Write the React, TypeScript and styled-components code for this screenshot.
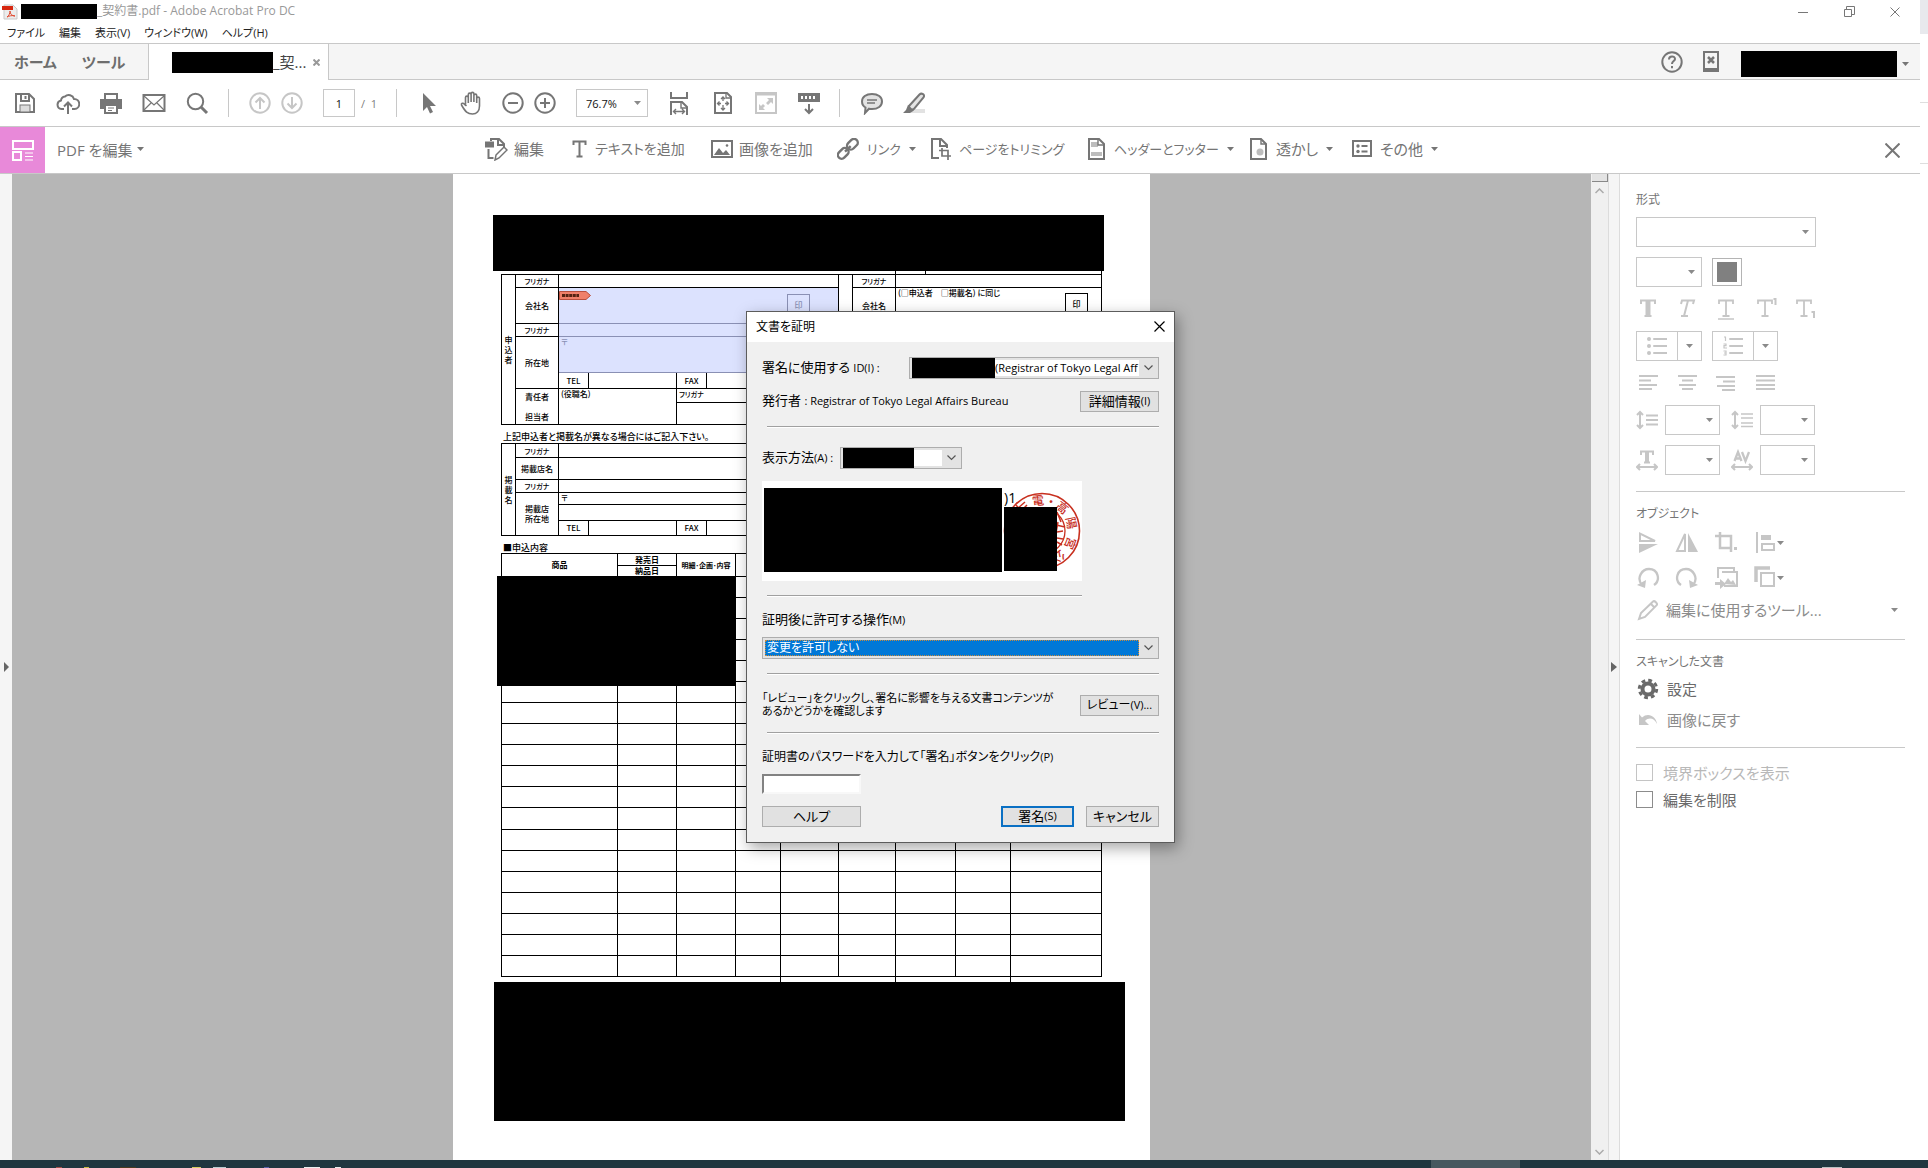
import React from 'react';
import styled, { createGlobalStyle, css } from 'styled-components';

const c = {
  line: '#c8c8c8',
  icon: '#767676',
  text: '#757575',
  soft: '#c6c6c6',
  caret: '#8a8a8a',
};

const Global = createGlobalStyle`
  * { box-sizing: border-box; }
  body { margin: 0; background: #fff; }
  body, button, input, select {
    font-family: "Open Sans", "Noto Sans CJK JP", sans-serif;
    font-feature-settings: "palt";
  }
  button, select, input { margin: 0; padding: 0; border: 0; background: none; color: inherit; border-radius: 0; }
  button { display: inline-flex; align-items: center; justify-content: center; white-space: nowrap; }
  svg { display: block; flex: none; }
`;

/* ---------- shell ---------- */
const Screen = styled.div`
  display: flex;
  flex-direction: column;
  height: 100vh;
  overflow: hidden;
`;
const Desktop = styled.div`
  display: flex;
  flex: 1;
  min-height: 0;
`;
const AppWindow = styled.div`
  position: relative;
  display: flex;
  flex-direction: column;
  flex: 1;
  min-width: 0;
`;
const Behind = styled.div`
  width: 8px;
  display: flex;
  flex-direction: column;
`;
const BehindPart = styled.div<{ $h: number; $tint?: boolean }>`
  height: ${p => p.$h}px;
  background: ${p => (p.$tint ? '#e8e9ed' : '#fff')};
  border-bottom: 1px solid ${p => (p.$tint ? '#e8e9ed' : '#dedede')};
`;
const Taskbar = styled.footer`
  display: flex;
  align-items: flex-end;
  height: 8px;
  background: #20363f;
`;
const TaskBit = styled.span<{ $gap: number; $w: number; $color: string; $h?: number }>`
  margin-left: ${p => p.$gap}px;
  width: ${p => p.$w}px;
  height: ${p => p.$h ?? 1}px;
  background: ${p => p.$color};
`;
const Redaction = styled.span<{ $w: number; $h: number }>`
  display: block;
  flex: none;
  width: ${p => p.$w}px;
  height: ${p => p.$h}px;
  background: #000;
`;

/* ---------- title and menu ---------- */
const TitleBar = styled.header`
  display: flex;
  align-items: center;
  height: 23px;
  padding: 0 20px 0 2px;
  font-size: 12px;
  color: #999;
`;
const TitleText = styled.h1`
  margin: 0;
  flex: 1;
  font-size: 12px;
  font-weight: 400;
  line-height: 20px;
  padding-bottom: 2px;
`;
const TitleIcon = styled.span`
  width: 19px;
`;
const WindowButton = styled.button`
  width: 46px;
  height: 20px;
  color: #777;
  &:last-child { width: 10px; }
  &:nth-last-child(2) { width: 46px; margin-right: 18px; }
`;
const MenuBar = styled.nav`
  display: flex;
  gap: 14px;
  height: 20px;
  padding-left: 7px;
`;
const MenuItem = styled.button`
  height: 20px;
  padding-bottom: 2px;
  font-size: 11px;
  color: #222;
`;

/* ---------- tabs ---------- */
const TabBar = styled.div`
  display: flex;
  height: 37px;
  background: #f5f5f5;
  border-top: 1px solid ${c.line};
`;
const TabGroup = styled.div`
  display: flex;
  gap: 25px;
  width: 149px;
  padding-left: 14px;
  border-right: 1px solid ${c.line};
  border-bottom: 1px solid ${c.line};
`;
const Tab = styled.button`
  font-size: 15px;
  font-weight: 700;
  color: #6e6e6e;
`;
const DocTab = styled.div`
  display: flex;
  align-items: center;
  width: 179px;
  padding-left: 23px;
  background: #fff;
  font-size: 15px;
  color: #444;
`;
const DocTabName = styled.span`
  flex: 1;
  min-width: 0;
  line-height: 22px;
  white-space: nowrap;
`;
const TabClose = styled.button`
  width: 23px;
  height: 26px;
  color: #999;
`;
const TabEnd = styled.div`
  display: flex;
  flex: 1;
  align-items: center;
  justify-content: flex-end;
  padding-right: 11px;
  border-left: 1px solid ${c.line};
  border-bottom: 1px solid ${c.line};
  color: ${c.icon};
`;
const Account = styled.button`
  gap: 5px;
  margin-left: 11px;
  padding-top: 4px;
`;

/* ---------- toolbars ---------- */
const Toolbar = styled.div`
  display: flex;
  align-items: center;
  height: 47px;
  padding-left: 3px;
  border-bottom: 1px solid ${c.line};
  color: ${c.icon};
`;
const ToolButton = styled.button<{ $w?: number; $off?: boolean }>`
  width: ${p => p.$w ?? 43}px;
  height: 32px;
  color: ${p => (p.$off ? c.soft : c.icon)};
`;
const Divider = styled.span<{ $l: number; $r: number }>`
  width: 1px;
  height: 28px;
  margin: 0 ${p => p.$r}px 0 ${p => p.$l}px;
  background: ${c.line};
`;
const Space = styled.span<{ $w: number }>`
  width: ${p => p.$w}px;
`;
const PageInput = styled.input`
  width: 32px;
  height: 28px;
  border: 1px solid ${c.line};
  font-size: 11px;
  text-align: center;
  color: #111;
`;
const PageTotal = styled.span`
  width: 35px;
  font-size: 11px;
  color: #808080;
`;
const EditBar = styled.div`
  display: grid;
  grid-template-columns: 1fr auto 1fr;
  align-items: center;
  height: 47px;
  border-bottom: 1px solid ${c.line};
  color: ${c.icon};
`;
const EditTitle = styled.div`
  display: flex;
  align-items: center;
  gap: 12px;
`;
const EditBadge = styled.span`
  display: flex;
  align-items: center;
  justify-content: center;
  width: 45px;
  height: 46px;
  background: #e889d9;
  color: #fff;
`;
const EditName = styled.button`
  gap: 5px;
  padding-bottom: 2px;
  font-size: 15px;
  color: ${c.text};
`;
const EditTools = styled.div`
  display: flex;
`;
const EditTool = styled.button<{ $w: number; $g?: number; $size?: number }>`
  width: ${p => p.$w}px;
  gap: ${p => p.$g ?? 8}px;
  justify-content: flex-start;
  padding-bottom: 2px;
  font-size: ${p => p.$size ?? 15}px;
  line-height: 24px;
  color: ${c.text};
`;
const CloseBar = styled.button`
  justify-self: end;
  width: 40px;
  height: 40px;
  margin-right: 8px;
  color: ${c.icon};
`;

/* ---------- workspace ---------- */
const Workspace = styled.div`
  display: flex;
  flex: 1;
  min-height: 0;
`;
const Rail = styled.button<{ $edge?: boolean }>`
  flex: none;
  width: 12px;
  height: 100%;
  background: #f5f5f5;
  color: #666;
  border-right: ${p => (p.$edge ? '1px solid #dcdcdc' : '0')};
  border-left: ${p => (p.$edge ? '1px solid #dcdcdc' : '0')};
`;
const Canvas = styled.main`
  display: flex;
  flex: 1;
  justify-content: center;
  min-width: 0;
  overflow: hidden;
  background: #b6b6b6;
`;
const Scrollbar = styled.div`
  display: flex;
  flex: none;
  flex-direction: column;
  justify-content: space-between;
  align-items: center;
  width: 17px;
  background: #f0f0f0;
  color: #aaa;
`;
const ScrollTop = styled.div`
  display: flex;
  flex-direction: column;
  align-items: center;
`;
const SplitHandle = styled.span`
  width: 16px;
  height: 8px;
  background: #e3e3e3;
  border-right: 1px solid #888;
  border-bottom: 1px solid #888;
`;
const ScrollButton = styled.button`
  width: 17px;
  height: 17px;
`;

/* ---------- document ---------- */
const Sheet = styled.article`
  flex: none;
  width: 697px;
  padding-top: 41px;
  background: #fff;
  color: #000;
  font-size: 8px;
  line-height: 10px;
  font-family: "Noto Sans CJK JP", sans-serif;
`;
const SheetBlock = styled.div<{ $l: number; $w: number; $h: number }>`
  margin-left: ${p => p.$l}px;
  width: ${p => p.$w}px;
  height: ${p => p.$h}px;
  background: #000;
`;
const FormArea = styled.div`
  width: 601px;
  margin-left: 48px;
`;
const Ticks = styled.div<{ $h: number }>`
  display: flex;
  height: ${p => p.$h}px;
`;
const Tick = styled.span<{ $w: number }>`
  width: ${p => p.$w}px;
  border-right: 1px solid #000;
`;
const FormTable = styled.table`
  width: 601px;
  table-layout: fixed;
  border-collapse: collapse;
  td, th {
    padding: 0;
    border: 1px solid #000;
    font-weight: 500;
    text-align: center;
    vertical-align: middle;
    overflow: hidden;
  }
  th { font-weight: 700; }
`;
const FormRow = styled.tr<{ $h: number }>`
  height: ${p => p.$h}px;
`;
const Cell = styled.td<{ $top?: boolean; $blue?: boolean }>`
  ${p => p.$top && css`&& { text-align: left; vertical-align: top; padding-left: 2px; }`}
  ${p => p.$blue && css`&& { background: #dce2fe; border-color: #8a90b4; color: #8a90b4; background-clip: padding-box; }`}
`;
const Kana = styled.span`
  font-size: 7px;
  line-height: 8px;
`;
const SheetCaption = styled.p<{ $h: number }>`
  margin: 0;
  padding-left: 2px;
  height: ${p => p.$h}px;
  font-size: 9px;
  line-height: ${p => p.$h + 6}px;
  font-weight: 500;
`;
const CompanyField = styled.div`
  display: flex;
  justify-content: space-between;
  align-items: flex-start;
  height: 34px;
  padding: 2px 28px 0 0;
`;
const SealBox = styled.span<{ $faint?: boolean }>`
  width: 23px;
  height: 23px;
  margin-top: ${p => (p.$faint ? 3 : 5)}px;
  border: 1px solid ${p => (p.$faint ? '#8a90b4' : '#000')};
  color: ${p => (p.$faint ? '#8a90b4' : '#000')};
  line-height: 20px;
  text-align: center;
`;
const SecondCompany = styled.div`
  display: flex;
  justify-content: space-between;
  align-items: flex-start;
  height: 34px;
  padding-right: 13px;
`;
const Items = styled.div`
  position: relative;
`;
const ItemsRedaction = styled.div`
  position: absolute;
  left: -4px;
  top: 23px;
  width: 239px;
  height: 110px;
  background: #000;
`;

/* ---------- side panel ---------- */
const Panel = styled.aside`
  flex: none;
  width: 300px;
  padding: 15px 15px 0 16px;
  color: ${c.soft};
`;
const PanelTitle = styled.h2`
  margin: 0;
  height: 22px;
  font-size: 12px;
  font-weight: 400;
  line-height: 22px;
  color: ${c.text};
`;
const PanelRow = styled.div<{ $h: number; $mt?: number; $gap?: number }>`
  display: flex;
  align-items: center;
  height: ${p => p.$h}px;
  margin-top: ${p => p.$mt ?? 0}px;
  gap: ${p => p.$gap ?? 0}px;
`;
const PanelRule = styled.hr<{ $mt: number; $mb: number }>`
  height: 1px;
  border: 0;
  margin: ${p => p.$mt}px 0 ${p => p.$mb}px;
  background: ${c.line};
`;
const SelectWrap = styled.span<{ $w: number; $h: number }>`
  display: grid;
  flex: none;
  align-items: center;
  width: ${p => p.$w}px;
  height: ${p => p.$h}px;
  border: 1px solid ${c.line};
  color: ${c.caret};
  > * { grid-area: 1 / 1; }
  > svg { justify-self: end; margin-right: 6px; pointer-events: none; }
`;
const PlainSelect = styled.select`
  appearance: none;
  width: 100%;
  height: 100%;
  padding-left: 9px;
  font-size: 11px;
  color: #111;
`;
const Swatch = styled.button`
  width: 30px;
  height: 28px;
  border: 1px solid #b4b4b4;
`;
const SwatchFill = styled.span`
  width: 20px;
  height: 20px;
  background: #808080;
`;
const PanelIcon = styled.button<{ $w?: number }>`
  width: ${p => p.$w ?? 39}px;
  height: 30px;
  justify-content: flex-start;
  color: ${c.soft};
`;
const SplitButton = styled.span`
  display: flex;
  width: 66px;
  height: 30px;
  border: 1px solid ${c.line};
`;
const SplitMain = styled.button`
  width: 41px;
  color: ${c.soft};
  border-right: 1px solid ${c.line};
`;
const SplitMore = styled.button`
  flex: 1;
  color: ${c.caret};
`;
const PanelLabelIcon = styled.span<{ $w: number }>`
  width: ${p => p.$w}px;
`;
const PanelAction = styled.button<{ $tone: string }>`
  flex: 1;
  gap: 8px;
  justify-content: flex-start;
  font-size: 15px;
  line-height: 24px;
  color: ${p => p.$tone};
`;
const MoreCaret = styled.span`
  color: ${c.caret};
`;
const PushRight = styled(MoreCaret)`
  margin-left: auto;
  margin-right: 7px;
`;
const UndoIcon = styled.span`
  color: ${c.soft};
`;
const CheckLabel = styled.label<{ $off?: boolean }>`
  display: flex;
  align-items: center;
  gap: 10px;
  height: 27px;
  font-size: 15px;
  line-height: 24px;
  color: ${p => (p.$off ? '#b8b8b8' : '#6a6a6a')};
`;
const CheckBox = styled.input`
  appearance: none;
  width: 17px;
  height: 17px;
  border: 1px solid #8c8c8c;
  background: #fff;
  &:disabled { border-color: #c4c4c4; }
`;

/* ---------- dialog ---------- */
const Dialog = styled.section`
  position: absolute;
  top: 311px;
  left: 50%;
  width: 429px;
  margin-left: -214px;
  background: #f0f0f0;
  border: 1px solid #5c5c5c;
  box-shadow: 3px 5px 14px rgba(0, 0, 0, 0.35);
  color: #000;
  font-size: 13px;
`;
const DialogBar = styled.div`
  display: flex;
  align-items: center;
  justify-content: space-between;
  height: 30px;
  padding: 0 0 2px 9px;
  background: #fff;
`;
const DialogTitle = styled.h2`
  margin: 0;
  font-size: 12px;
  font-weight: 400;
`;
const DialogClose = styled.button`
  width: 30px;
  height: 28px;
`;
const DialogBody = styled.form`
  padding: 15px 15px 15px 15px;
`;
const Row = styled.div<{ $mt?: number; $h?: number }>`
  display: flex;
  align-items: center;
  justify-content: space-between;
  height: ${p => p.$h ?? 22}px;
  margin-top: ${p => p.$mt ?? 0}px;
`;
const DialogLabel = styled.label<{ $dense?: boolean }>`
  font-size: ${p => (p.$dense ? 12 : 13)}px;
  line-height: 18px;
  padding-bottom: 2px;
  white-space: nowrap;
`;
const DialogText = styled.p<{ $dense?: boolean }>`
  margin: 0;
  font-size: ${p => (p.$dense ? 11 : 13)}px;
  line-height: 13px;
  padding-bottom: 2px;
  white-space: nowrap;
`;
const Small = styled.span`
  font-size: 11px;
`;
const Rule = styled.hr<{ $mt: number; $short?: boolean }>`
  height: 2px;
  margin: ${p => p.$mt}px ${p => (p.$short ? 77 : 0)}px 0 5px;
  border: 0;
  border-top: 1px solid #a0a0a0;
  border-bottom: 1px solid #fff;
`;
const Combo = styled.span<{ $w?: number }>`
  display: flex;
  align-items: center;
  width: ${p => (p.$w ? `${p.$w}px` : '100%')};
  height: 22px;
  padding-left: 2px;
  border: 1px solid #adadad;
  background: #e3e3e3;
`;
const ComboSelect = styled.select<{ $active?: boolean }>`
  appearance: none;
  flex: 1;
  min-width: 0;
  height: 16px;
  background: ${p => (p.$active ? '#0078d7' : '#fff')};
  color: ${p => (p.$active ? '#fff' : '#000')};
  outline: ${p => (p.$active ? '1px dotted #c98a3c' : 'none')};
  outline-offset: -1px;
  padding-left: ${p => (p.$active ? 2 : 0)}px;
  font-size: ${p => (p.$active ? 12 : 11)}px;
  line-height: 16px;
  text-overflow: clip;
`;
const ComboArrow = styled.span`
  display: flex;
  justify-content: center;
  width: 19px;
  color: #555;
`;
const ComboRow = styled.div`
  display: flex;
  align-items: center;
  gap: 7px;
`;
const PushButton = styled.button<{ $w: number; $primary?: boolean; $dense?: boolean }>`
  flex: none;
  width: ${p => p.$w}px;
  height: 21px;
  padding-bottom: 2px;
  border: ${p => (p.$primary ? '2px solid #0a70c4' : '1px solid #adadad')};
  background: #e1e1e1;
  font-size: ${p => (p.$dense ? 12 : 13)}px;
`;
const Preview = styled.div`
  position: relative;
  display: flex;
  gap: 2px;
  width: 320px;
  height: 100px;
  margin-top: 12px;
  padding: 7px 2px;
  background: #fff;
  overflow: hidden;
`;
const PreviewSide = styled.div`
  position: relative;
  display: flex;
  flex-direction: column;
  font-size: 14px;
`;
const PreviewText = styled.span`
  height: 19px;
  line-height: 19px;
`;
const Stamp = styled.svg`
  position: absolute;
  left: 241px;
  top: 11px;
  overflow: visible;
`;
const Password = styled.input`
  width: 99px;
  height: 20px;
  margin-top: 7px;
  border: 2px solid;
  border-color: #828282 #f8f8f8 #f8f8f8 #828282;
  background: #fff;
  display: block;
`;
const ButtonPair = styled.div`
  display: flex;
  gap: 12px;
`;

/* ---------- drawings ---------- */
type IcoProps = { s?: number; w?: number; children: React.ReactNode; sw?: number };
const Ico = ({ s = 24, w, sw = 2, children }: IcoProps) => (
  <svg width={w ?? s} height={s} viewBox={`0 0 ${w ?? s} ${s}`} fill="none" stroke="currentColor" strokeWidth={sw} aria-hidden="true">
    {children}
  </svg>
);
const F = { fill: 'currentColor', stroke: 'none' };
const Caret = () => (
  <svg width="7" height="4" viewBox="0 0 7 4" aria-hidden="true"><path d="M0 0h7L3.500 4z" fill="currentColor" /></svg>
);
const Chevron = () => (
  <svg width="9" height="6" viewBox="0 0 9 6" aria-hidden="true"><path d="M.5.5l4 4 4-4" fill="none" stroke="currentColor" strokeWidth="1.200" /></svg>
);
const PdfLogo = () => (
  <svg width="16" height="16" viewBox="0 0 16 16" aria-hidden="true">
    <path d="M2 1h9l4 4v10H2z" fill="#ececec" stroke="#c9c9c9" />
    <path d="M0 2h11v4H0z" fill="#d6260f" />
    <path d="M5 13c2-1 3-4 3-6 0 3 2 5 5 5-3-1-6 0-8 1z" fill="none" stroke="#e0492f" />
  </svg>
);
const Save = () => <Ico><path d="M3 3h13l5 5v13H3z" /><path d="M8 3v7h8V3M12.500 5v3" /><rect x="7" y="14" width="10" height="7" fill="#dcdcdc" strokeWidth="1" /></Ico>;
const Cloud = () => <Ico><path d="M8 18H5.500A4.300 4.300 0 0 1 5 9.500 4.500 4.500 0 0 1 9 5.500 5.500 5.500 0 0 1 18 8a5 5 0 0 1 .5 10H16" /><path d="M12 23V12M8 15.500l4-4 4 4" /></Ico>;
const Printer = () => <Ico><path d="M6 8V3h12v5" /><path d="M1 8h22v10h-4v-5H5v5H1z" {...F} /><path d="M6 14h12v8H6z" /><path d="M9 17h6M9 19.500h4" strokeWidth="1" /></Ico>;
const Mail = () => <Ico><rect x="1.500" y="4" width="21" height="16" /><path d="M2 5l10 9L22 5M2 19l7-7M22 19l-7-7" strokeWidth="1.200" /></Ico>;
const Search = () => <Ico><circle cx="10.500" cy="10.500" r="7.700" /><path d="M16 16l6 6" strokeWidth="3" /></Ico>;
const Circled = ({ d }: { d: string }) => <Ico><circle cx="12" cy="12" r="9.700" /><path d={d} /></Ico>;
const Cursor = () => <Ico><path d="M6 2v18l4-4 3 6.500 3-1.500-3-6h6z" {...F} /></Ico>;
const Hand = () => <Ico sw={1.6}><path d="M6.500 15V6.500a1.400 1.400 0 0 1 2.800 0V12M9.300 11V3.500a1.400 1.400 0 0 1 2.800 0V11M12.100 11V2.800a1.400 1.400 0 0 1 2.800 0V11M14.900 11V4.500a1.400 1.400 0 0 1 2.800 0V12M17.700 12V7.500a1.400 1.400 0 0 1 2.800 0V15c0 5-3 8-7 8-5 0-7-2-11-9-.6-1.600 1.600-2.500 2.700-1L7.500 15" /></Ico>;
const FitWidth = () => <Ico><path d="M4 1v6h16V1M4 24V11h11l5 5v8" /><path d="M14 11v6h6M7 20.500h10M9 18l-2.500 2.500L9 23M15 18l2.500 2.500L15 23" strokeWidth="1.400" /></Ico>;
const FitPage = () => <Ico><path d="M4 2h12l4 4v16H4z" /><path d="M12 6v4M12 14v5M7 12.500h3M14 12.500h4M10 8l2-2 2 2M10 17l2 2 2-2M8.500 10.500l-2 2 2 2M15.500 10.500l2 2-2 2" strokeWidth="1.300" /><path d="M15 2v5h5" strokeWidth="1.300" /></Ico>;
const FullScreen = () => <Ico><path d="M2 2h20v20H2zM2 3.500h20" /><path d="M19 7v6l-2-2-3 3-2-2 3-3-2-2zM5 19v-6l2 2 2-2 2 2-2 2 2 2z" {...F} /></Ico>;
const Keys = () => <Ico><path d="M1 2h22v9H1z" {...F} /><path d="M4 6.500h16" stroke="#fff" strokeWidth="3" strokeDasharray="2 2" /><path d="M12 13v9M8 18l4 4 4-4" /></Ico>;
const Comment = () => <Ico><path d="M12 3c6 0 10 3 10 7.500S18 18 12 18c-1 0-2 0-3-.3L5 22l.5-5.500C3 15 2 13 2 10.500 2 6 6 3 12 3z" fill="#e2e2e2" /><path d="M7 9h10M7 12h8" strokeWidth="1.300" /></Ico>;
const Marker = () => <Ico><path d="M8 22h15v-4H12z" fill="#e2e2e2" stroke="none" /><path d="M7 15L17.500 3.500c2-2 6 0 4 3L12 18l-4 1.500z" fill="#e4e4e4" strokeWidth="2" /><path d="M6 14l6 5.500L8 22H1l3-3z" {...F} /></Ico>;
const Help = () => <Ico><circle cx="12" cy="12" r="9.700" /><path d="M9 9.500c0-4 6-4 6-.5 0 2-3 2.300-3 5M12 16v2.200" /></Ico>;
const Phone = () => <Ico><path d="M5 2h14v19H5z" /><path d="M5 18h14v4H5z" {...F} /><path d="M9 7l6 6M15 7l-6 6" strokeWidth="2.500" /></Ico>;
const EditBadgeIcon = () => <Ico><path d="M2 3h20v8H2zM2 14h8v8H2z" /><path d="M14 15h8M14 18.500h8M14 22h8" strokeWidth="1.200" /></Ico>;
const EditDoc = () => <Ico><path d="M1 4.500h9v6H1z" {...F} /><path d="M7 4V2h8l5 5v3M14 2v6h6M4.500 12v9h5" /><path d="M12 18l8-8 3 3-8 8-4 2z" fill="#fff" strokeWidth="1.500" /></Ico>;
const TextT = () => <Ico s={18} w={15}><path d="M1.500 5V1.500h12V5M7.500 2v14M4.500 16.500h6" /></Ico>;
const Picture = () => <Ico s={22}><path d="M1 3h20v16H1z" /><path d="M3 17l5-7 4 5 3-3 4 5z" {...F} /><circle cx="16" cy="7.500" r="1.300" {...F} /></Ico>;
const LinkIcon = () => <Ico s={22}><g transform="rotate(-45 11 11)"><rect x="-1.500" y="7" width="12" height="7.500" rx="3.700" strokeWidth="2.400" /><rect x="11.500" y="7" width="12" height="7.500" rx="3.700" strokeWidth="2.400" /><path d="M7 10.800h8" strokeWidth="2.400" /></g></Ico>;
const CropPage = () => <Ico s={22} w={20}><path d="M8 20H1V1h9l6 6v3M9 1v7h7" /><path d="M11 10v8h9M8 12.500h9V22" strokeWidth="1.700" /></Ico>;
const HeaderPage = () => <Ico s={22} w={18}><path d="M1 1h10l5 5v15H1z" /><path d="M3 4h7v5H3zM3 14h11v4H3z" fill="#bdbdbd" stroke="none" /><path d="M10 1v6h6" strokeWidth="1.400" /></Ico>;
const MarkPage = () => <Ico s={22} w={18}><path d="M1 1h10l5 5v15H1z" /><circle cx="10" cy="14" r="3.500" fill="#bdbdbd" stroke="none" /><path d="M11 1v5h5" strokeWidth="1.400" /></Ico>;
const ListBox = () => <Ico s={20}><path d="M1 2h18v15H1z" /><circle cx="6" cy="7" r="1.700" {...F} /><circle cx="6" cy="12.500" r="1.700" {...F} /><path d="M9.500 7h6M9.500 12.500h6" /></Ico>;
const Cross = ({ n, sw = 1 }: { n: number; sw?: number }) => <Ico s={n} sw={sw}><path d={`M.5.5L${n - 0.5} ${n - 0.5}M${n - 0.5}.5L.5 ${n - 0.5}`} /></Ico>;
const Tee = ({ kind }: { kind: 'b' | 'i' | 'u' | 'sup' | 'sub' }) => (
  <Ico s={24} sw={kind === 'b' ? 2 : 1.5}>
    {kind === 'i'
      ? <path d="M6 7l1-3.500h12L18 7M13 3.500L9 19M6 19h7" strokeWidth="2" />
      : <path d="M5 7V3.500h14V7M12 3.500V19M8.500 19h7" strokeWidth={kind === 'b' ? 2 : 1.8} />}
    {kind === 'b' && <path d="M12 3v16" strokeWidth="5" />}
    {kind === 'u' && <path d="M4 22h16" />}
    {kind === 'sup' && <path d="M20.500 2h2V8" strokeWidth="2" />}
    {kind === 'sub' && <path d="M19.500 15h2.500v6" strokeWidth="2" />}
  </Ico>
);
const Bullets = ({ numbered }: { numbered?: boolean }) => (
  <Ico s={20}>
    <path d="M7 3h13M7 10h13M7 17h13" strokeLinecap="round" />
    {numbered
      ? <path d="M1 1h1.500v4M.5 8H3v1.700H1V12h3M.5 15H3v4H.5M3 17H1" strokeWidth="1.200" />
      : <><circle cx="2" cy="3" r="2" {...F} /><circle cx="2" cy="10" r="2" {...F} /><circle cx="2" cy="17" r="2" {...F} /></>}
  </Ico>
);
const Align = ({ d }: { d: string }) => <Ico s={18} w={24}><path d={d} /></Ico>;
const Spacing = ({ four }: { four?: boolean }) => (
  <Ico s={20} w={22}><path d="M4 3v14M1 5l3-3 3 3M1 15l3 3 3-3" /><path d={four ? 'M10 4h12M10 8h12M10 13h12M10 16.500h12' : 'M10 5.500h12M10 10h12M10 14.500h12'} strokeWidth={four ? 1.6 : 1.8} /></Ico>
);
const WidthT = () => <Ico s={22}><path d="M5 6V2.500h12V6M8 13.500h6" /><path d="M11 2v12" strokeWidth="4" /><path d="M2 18h18M4 15l-3 3 3 3M18 15l3 3-3 3" /></Ico>;
const Kerning = () => <Ico s={22}><path d="M3.500 12L7 3l3.500 9M5 9.500h4M11 3l3.500 9L18 3" strokeWidth="2.300" /><path d="M2 18h18M4 15l-3 3 3 3M18 15l3 3-3 3" /></Ico>;
const FlipV = () => <Ico><path d="M4 2.500v7.500h15z" /><path d="M3 13h19L3 22z" {...F} /></Ico>;
const FlipH = () => <Ico><path d="M10 3v17H2z" /><path d="M13 2v19h10z" {...F} /></Ico>;
const Crop = () => <Ico><path d="M6 1v16h10M1 5h16v16" strokeWidth="2.500" /><path d="M20 16h3v3h-3z" {...F} /></Ico>;
const Edges = () => <Ico><path d="M4 1v21" /><path d="M8 4h10v5H8z" {...F} /><path d="M9 13h12v6H9z" /></Ico>;
const Rotate = ({ cw }: { cw?: boolean }) => <Ico><g transform={cw ? 'translate(24 0) scale(-1 1)' : undefined}><path d="M6 19C0 12 6 3 13 3c9 0 12 11 5 16" strokeWidth="2.300" /><path d="M1 19l8 3 1-8z" {...F} /></g></Ico>;
const Replace = () => <Ico><path d="M4 12V2h16v3" /><path d="M8 6h15v14H10" /><path d="M10 18l4-6 3 4 2-2 3 5zM6 13l6 5-6 5v-4H1v-3h5z" {...F} /></Ico>;
const Stack = () => <Ico><path d="M3 16V2h14" strokeWidth="3.500" /><rect x="8" y="7" width="13" height="13" /></Ico>;
const Pencil = () => <Ico s={22}><path d="M2 20l2-6L16 2.500c1.500-1.300 5 2 3.700 3.700L8 18zM14 5l4 4" /></Ico>;
const Gear = () => <Ico s={22}><circle cx="11" cy="11" r="5.500" strokeWidth="4" /><circle cx="11" cy="11" r="8.700" strokeWidth="3" strokeDasharray="3.800 3.030" /></Ico>;
const Undo = () => <Ico s={22}><path d="M2 5v11h10l-4-4c4-4 9-3 12 3-1-8-9-12-15-6.500z" {...F} /></Ico>;

const stampMarks: Array<[string, number, number, number]> = [
  ['電', 35, 9, -6], ['・', 48, 10, 12], ['高', 59, 16, 38], ['陽', 68, 31, 78], ['宮', 67, 51, 112], ['公', 56, 64, 145],
];
const StampArt = () => (
  <Stamp width="78" height="78" viewBox="0 0 78 78" fill="none" stroke="#c8301f" aria-hidden="true">
    <circle cx="39" cy="39" r="37.500" strokeWidth="1.600" />
    <circle cx="39" cy="39" r="23" strokeWidth="1.300" />
    <path d="M54 20l4 10M53 33l9 2M55 30l-3 16M54 40l6-1M54 46l6 1M54 50l5 3" strokeWidth="1.500" />
    <path d="M14 17l8-7M17 20l7-7M13 13l5 6" strokeWidth="1.500" />
    <g fill="#c8301f" stroke="none" fontSize="12" fontWeight="500" textAnchor="middle" fontFamily="Noto Sans CJK JP">
      {stampMarks.map(([ch, x, y, a]) => (
        <text key={ch} transform={`translate(${x} ${y}) rotate(${a})`} y="4">{ch}</text>
      ))}
    </g>
  </Stamp>
);

const DropSelect = ({ w, h = 30, label, value = '' }: { w: number; h?: number; label: string; value?: string }) => (
  <SelectWrap $w={w} $h={h}>
    <PlainSelect aria-label={label} defaultValue={value}><option value={value}>{value}</option></PlainSelect>
    <Caret />
  </SelectWrap>
);

/* ---------- document parts ---------- */
const Cols = ({ widths }: { widths: number[] }) => (
  <colgroup>{widths.map((w, i) => <col key={i} style={{ width: w }} />)}</colgroup>
);
const formCols = [14, 43, 30, 88, 30, 132, 14, 43, 206];
const itemCols = [116, 59, 59, 45, 58, 57, 60, 55, 91];
const itemRows = [21, 21, 21, 21, 21, 21, 21, 21, 21, 21, 21, 22, 21, 21, 21, 21, 21, 21, 21];

const Applicant = () => (
  <FormTable>
    <Cols widths={formCols} />
    <tbody>
      <FormRow $h={13}>
        <Cell rowSpan={7}>申<br />込<br />者</Cell><Cell><Kana>フリガナ</Kana></Cell><Cell colSpan={4} />
        <Cell rowSpan={7} /><Cell><Kana>フリガナ</Kana></Cell><Cell />
      </FormRow>
      <FormRow $h={36}>
        <Cell>会社名</Cell>
        <Cell colSpan={4} $blue>
          <CompanyField>
            <svg width="32" height="9" viewBox="0 0 32 9" aria-hidden="true">
              <path d="M.5.5H27l4.500 4-4.500 4H.5z" fill="#f0806a" stroke="#b8503f" />
              <path d="M3 4.500h17" stroke="#521" strokeWidth="3" strokeDasharray="3 .6" />
            </svg>
            <SealBox $faint>印</SealBox>
          </CompanyField>
        </Cell>
        <Cell>会社名</Cell>
        <Cell $top><SecondCompany>(□申込者　□掲載名) に同じ<SealBox>印</SealBox></SecondCompany></Cell>
      </FormRow>
      <FormRow $h={13}><Cell><Kana>フリガナ</Kana></Cell><Cell colSpan={4} $blue /><Cell /><Cell /></FormRow>
      <FormRow $h={36}><Cell rowSpan={2}>所在地</Cell><Cell colSpan={4} $blue $top>〒</Cell><Cell rowSpan={4} /><Cell rowSpan={4} /></FormRow>
      <FormRow $h={16}><Cell>TEL</Cell><Cell /><Cell>FAX</Cell><Cell /></FormRow>
      <FormRow $h={14}>
        <Cell rowSpan={2}>責任者<br /><br />担当者</Cell><Cell rowSpan={2} colSpan={2} $top>(役職名)</Cell><Cell colSpan={2} $top><Kana>フリガナ</Kana></Cell>
      </FormRow>
      <FormRow $h={22}><Cell colSpan={2} /></FormRow>
    </tbody>
  </FormTable>
);
const Listing = () => (
  <FormTable>
    <Cols widths={formCols} />
    <tbody>
      <FormRow $h={14}><Cell rowSpan={6}>掲<br />載<br />名</Cell><Cell><Kana>フリガナ</Kana></Cell><Cell colSpan={7} /></FormRow>
      <FormRow $h={22}><Cell>掲載店名</Cell><Cell colSpan={7} /></FormRow>
      <FormRow $h={13}><Cell><Kana>フリガナ</Kana></Cell><Cell colSpan={7} /></FormRow>
      <FormRow $h={12}><Cell rowSpan={3}>掲載店<br />所在地</Cell><Cell colSpan={7} $top>〒</Cell></FormRow>
      <FormRow $h={16}><Cell colSpan={7} /></FormRow>
      <FormRow $h={15}><Cell>TEL</Cell><Cell /><Cell>FAX</Cell><Cell colSpan={4} /></FormRow>
    </tbody>
  </FormTable>
);
const ItemTable = () => (
  <Items>
    <FormTable>
      <Cols widths={itemCols} />
      <thead>
        <FormRow $h={12}>
          <th rowSpan={2}>商品</th><th>発売日</th><th rowSpan={2}><Kana>明細･企画･内容</Kana></th>
          {[0, 1, 2, 3, 4, 5].map(i => <th key={i} rowSpan={2} />)}
        </FormRow>
        <FormRow $h={11}><th>納品日</th></FormRow>
      </thead>
      <tbody>
        {itemRows.map((h, i) => (
          <FormRow key={i} $h={h}>{itemCols.map((_, j) => <Cell key={j} />)}</FormRow>
        ))}
      </tbody>
    </FormTable>
    <ItemsRedaction />
  </Items>
);

export default function App() {
  return (
    <Screen>
      <Global />
      <Desktop>
        <AppWindow>
          <TitleBar>
            <TitleIcon><PdfLogo /></TitleIcon>
            <Redaction $w={76} $h={15} />
            <TitleText>_契約書.pdf - Adobe Acrobat Pro DC</TitleText>
            <WindowButton aria-label="最小化"><Ico s={10} sw={1}><path d="M0 5.500h10" /></Ico></WindowButton>
            <WindowButton aria-label="元に戻す"><Ico s={11} sw={1}><path d="M.5 3.500h7v7h-7zM2.500 3V.5h8v8H8" /></Ico></WindowButton>
            <WindowButton aria-label="閉じる"><Cross n={10} /></WindowButton>
          </TitleBar>
          <MenuBar>
            {['ファイル', '編集', '表示(V)', 'ウィンドウ(W)', 'ヘルプ(H)'].map(m => <MenuItem key={m}>{m}</MenuItem>)}
          </MenuBar>
          <TabBar>
            <TabGroup><Tab>ホーム</Tab><Tab>ツール</Tab></TabGroup>
            <DocTab>
              <Redaction $w={101} $h={21} />
              <DocTabName>_契...</DocTabName>
              <TabClose aria-label="タブを閉じる"><Cross n={7} sw={2} /></TabClose>
            </DocTab>
            <TabEnd>
              <ToolButton $w={39} aria-label="ヘルプ"><Help /></ToolButton>
              <ToolButton $w={39} aria-label="モバイル"><Phone /></ToolButton>
              <Account aria-label="アカウント"><Redaction $w={156} $h={26} /><Caret /></Account>
            </TabEnd>
          </TabBar>
          <Toolbar>
            <ToolButton aria-label="保存"><Save /></ToolButton>
            <ToolButton aria-label="アップロード"><Cloud /></ToolButton>
            <ToolButton aria-label="印刷"><Printer /></ToolButton>
            <ToolButton aria-label="メール"><Mail /></ToolButton>
            <ToolButton aria-label="検索"><Search /></ToolButton>
            <Divider $l={10} $r={15} />
            <ToolButton $w={32} $off aria-label="前のページ"><Circled d="M12 18V7M7.500 11.500L12 7l4.500 4.500" /></ToolButton>
            <ToolButton $w={32} $off aria-label="次のページ"><Circled d="M12 6v11M7.500 12.500L12 17l4.500-4.500" /></ToolButton>
            <Space $w={15} />
            <PageInput aria-label="ページ" defaultValue="1" />
            <Space $w={6} />
            <PageTotal>/ &nbsp;1</PageTotal>
            <Divider $l={0} $r={11} />
            <ToolButton $w={42} aria-label="選択"><Cursor /></ToolButton>
            <ToolButton $w={42} aria-label="手のひら"><Hand /></ToolButton>
            <Space $w={5} />
            <ToolButton $w={32} aria-label="縮小"><Circled d="M7 12h10" /></ToolButton>
            <ToolButton $w={32} aria-label="拡大"><Circled d="M7 12h10M12 7v10" /></ToolButton>
            <Space $w={15} />
            <DropSelect w={72} h={28} label="ズーム" value="76.7%" />
            <Space $w={9} />
            <ToolButton $w={44} aria-label="幅に合わせる"><FitWidth /></ToolButton>
            <ToolButton $w={43} aria-label="全体表示"><FitPage /></ToolButton>
            <ToolButton $off aria-label="フルスクリーン"><FullScreen /></ToolButton>
            <ToolButton aria-label="ツールバー"><Keys /></ToolButton>
            <Divider $l={9} $r={11} />
            <ToolButton $w={42} aria-label="注釈"><Comment /></ToolButton>
            <ToolButton $w={42} aria-label="ハイライト"><Marker /></ToolButton>
          </Toolbar>
          <EditBar>
            <EditTitle>
              <EditBadge><EditBadgeIcon /></EditBadge>
              <EditName>PDF を編集<Caret /></EditName>
            </EditTitle>
            <EditTools>
              <EditTool $w={88} $g={6}><EditDoc />編集</EditTool>
              <EditTool $w={139} $size={14}><TextT />テキストを追加</EditTool>
              <EditTool $w={126} $g={6}><Picture />画像を追加</EditTool>
              <EditTool $w={94} $size={13}><LinkIcon />リンク<Caret /></EditTool>
              <EditTool $w={157} $size={13}><CropPage />ページをトリミング</EditTool>
              <EditTool $w={162} $size={13}><HeaderPage />ヘッダーとフッター<Caret /></EditTool>
              <EditTool $w={102}><MarkPage />透かし<Caret /></EditTool>
              <EditTool $w={84}><ListBox />その他<Caret /></EditTool>
            </EditTools>
            <CloseBar aria-label="ツールを閉じる"><Cross n={15} sw={2} /></CloseBar>
          </EditBar>
          <Workspace>
            <Rail aria-label="ナビゲーションを開く"><Ico s={10} w={5}><path d="M0 0l5 5-5 5z" {...F} /></Ico></Rail>
            <Canvas>
              <Sheet>
                <SheetBlock $l={40} $w={611} $h={56} />
                <FormArea>
                  <Ticks $h={3}><Tick $w={395} /><Tick $w={30} /><Tick $w={176} /></Ticks>
                  <Applicant />
                  <SheetCaption $h={18}>上記申込者と掲載名が異なる場合にはご記入下さい。</SheetCaption>
                  <Listing />
                  <SheetCaption $h={17}>■申込内容</SheetCaption>
                  <ItemTable />
                  <Ticks $h={5}><Tick $w={280} /><Tick $w={115} /><Tick $w={115} /></Ticks>
                </FormArea>
                <SheetBlock $l={41} $w={631} $h={139} />
              </Sheet>
            </Canvas>
            <Scrollbar>
              <ScrollTop>
                <SplitHandle />
                <ScrollButton aria-label="上へ"><Ico s={6} w={9} sw={1.5}><path d="M.5 5l4-4 4 4" /></Ico></ScrollButton>
              </ScrollTop>
              <ScrollButton aria-label="下へ"><Ico s={6} w={9} sw={1.5}><path d="M.5 1l4 4 4-4" /></Ico></ScrollButton>
            </Scrollbar>
            <Rail $edge aria-label="パネルを閉じる"><Ico s={10} w={6}><path d="M0 0l6 5-6 5z" {...F} /></Ico></Rail>
            <Panel>
              <PanelTitle>形式</PanelTitle>
              <PanelRow $h={30} $mt={6}><DropSelect w={180} label="フォント" /></PanelRow>
              <PanelRow $h={30} $mt={10} $gap={10}>
                <DropSelect w={66} label="サイズ" />
                <Swatch aria-label="色"><SwatchFill /></Swatch>
              </PanelRow>
              <PanelRow $h={44}>
                <PanelIcon aria-label="太字"><Tee kind="b" /></PanelIcon>
                <PanelIcon aria-label="斜体"><Tee kind="i" /></PanelIcon>
                <PanelIcon aria-label="下線"><Tee kind="u" /></PanelIcon>
                <PanelIcon aria-label="上付き"><Tee kind="sup" /></PanelIcon>
                <PanelIcon aria-label="下付き"><Tee kind="sub" /></PanelIcon>
              </PanelRow>
              <PanelRow $h={30} $gap={10}>
                <SplitButton><SplitMain aria-label="箇条書き"><Bullets /></SplitMain><SplitMore aria-label="箇条書きの種類"><Caret /></SplitMore></SplitButton>
                <SplitButton><SplitMain aria-label="番号付き"><Bullets numbered /></SplitMain><SplitMore aria-label="番号の種類"><Caret /></SplitMore></SplitButton>
              </PanelRow>
              <PanelRow $h={44}>
                <PanelIcon aria-label="左揃え"><Align d="M3 2h19M3 6.500h12M3 11h18M3 15h13" /></PanelIcon>
                <PanelIcon aria-label="中央揃え"><Align d="M3 2h19M7 6.500h11M4 11h17M7 15h11" /></PanelIcon>
                <PanelIcon aria-label="右揃え"><Align d="M2 3h19M9 7.500h12M3 12h18M8 16h13" /></PanelIcon>
                <PanelIcon aria-label="両端揃え"><Align d="M3 2h19M3 6.500h19M3 11h19M3 15h19" /></PanelIcon>
              </PanelRow>
              <PanelRow $h={30}>
                <PanelLabelIcon $w={29}><Spacing /></PanelLabelIcon><DropSelect w={55} label="行間" /><Space $w={11} />
                <PanelLabelIcon $w={29}><Spacing four /></PanelLabelIcon><DropSelect w={55} label="段落間隔" />
              </PanelRow>
              <PanelRow $h={30} $mt={10}>
                <PanelLabelIcon $w={29}><WidthT /></PanelLabelIcon><DropSelect w={55} label="水平比率" /><Space $w={11} />
                <PanelLabelIcon $w={29}><Kerning /></PanelLabelIcon><DropSelect w={55} label="文字間隔" />
              </PanelRow>
              <PanelRule $mt={16} $mb={11} />
              <PanelTitle>オブジェクト</PanelTitle>
              <PanelRow $h={35}>
                <PanelIcon aria-label="上下反転"><FlipV /></PanelIcon>
                <PanelIcon aria-label="左右反転"><FlipH /></PanelIcon>
                <PanelIcon aria-label="切り抜き"><Crop /></PanelIcon>
                <PanelIcon aria-label="整列"><Edges /><MoreCaret><Caret /></MoreCaret></PanelIcon>
              </PanelRow>
              <PanelRow $h={35}>
                <PanelIcon aria-label="反時計回り"><Rotate /></PanelIcon>
                <PanelIcon aria-label="時計回り"><Rotate cw /></PanelIcon>
                <PanelIcon aria-label="置換"><Replace /></PanelIcon>
                <PanelIcon aria-label="重なり順"><Stack /><MoreCaret><Caret /></MoreCaret></PanelIcon>
              </PanelRow>
              <PanelRow $h={30}>
                <Space $w={1} /><Pencil />
                <Space $w={7} />
                <PanelAction $tone="#8c8c8c">編集に使用するツール...<PushRight><Caret /></PushRight></PanelAction>
              </PanelRow>
              <PanelRule $mt={14} $mb={11} />
              <PanelTitle>スキャンした文書</PanelTitle>
              <PanelRow $h={32}><Space $w={1} /><PanelAction $tone="#6a6a6a"><Gear />設定</PanelAction></PanelRow>
              <PanelRow $h={30}><Space $w={1} /><PanelAction $tone="#8c8c8c"><UndoIcon><Undo /></UndoIcon>画像に戻す</PanelAction></PanelRow>
              <PanelRule $mt={12} $mb={11} />
              <CheckLabel $off><CheckBox type="checkbox" disabled />境界ボックスを表示</CheckLabel>
              <CheckLabel><CheckBox type="checkbox" />編集を制限</CheckLabel>
            </Panel>
          </Workspace>
          <Dialog role="dialog" aria-labelledby="certify-title">
            <DialogBar>
              <DialogTitle id="certify-title">文書を証明</DialogTitle>
              <DialogClose aria-label="閉じる"><Cross n={11} sw={1.2} /></DialogClose>
            </DialogBar>
            <DialogBody onSubmit={e => e.preventDefault()}>
              <Row>
                <DialogLabel htmlFor="sign-id">署名に使用する <Small>ID(I) :</Small></DialogLabel>
                <Combo $w={250}>
                  <Redaction $w={83} $h={20} />
                  <ComboSelect id="sign-id"><option>(Registrar of Tokyo Legal Aff</option></ComboSelect>
                  <ComboArrow><Chevron /></ComboArrow>
                </Combo>
              </Row>
              <Row $mt={11}>
                <DialogText>発行者 <Small>: Registrar of Tokyo Legal Affairs Bureau</Small></DialogText>
                <PushButton $w={79} type="button">詳細情報<Small>(I)</Small></PushButton>
              </Row>
              <Rule $mt={14} />
              <Row $mt={19}>
                <ComboRow>
                  <DialogLabel htmlFor="appearance">表示方法<Small>(A) :</Small></DialogLabel>
                  <Combo $w={122}>
                    <Redaction $w={71} $h={20} />
                    <ComboSelect id="appearance"><option> </option></ComboSelect>
                    <ComboArrow><Chevron /></ComboArrow>
                  </Combo>
                </ComboRow>
              </Row>
              <Preview>
                <Redaction $w={238} $h={84} />
                <StampArt />
                <PreviewSide><PreviewText>)1</PreviewText><Redaction $w={53} $h={64} /></PreviewSide>
              </Preview>
              <Rule $mt={14} $short />
              <Row $mt={14} $h={18}><DialogLabel htmlFor="allowed">証明後に許可する操作<Small>(M)</Small></DialogLabel></Row>
              <Row $mt={8}>
                <Combo>
                  <ComboSelect id="allowed" $active><option>変更を許可しない</option></ComboSelect>
                  <ComboArrow><Chevron /></ComboArrow>
                </Combo>
              </Row>
              <Rule $mt={14} />
              <Row $mt={17} $h={26}>
                <DialogText $dense>「レビュー」をクリックし、署名に影響を与える文書コンテンツが<br />あるかどうかを確認します</DialogText>
                <PushButton $w={79} $dense type="button">レビュー<Small>(V)...</Small></PushButton>
              </Row>
              <Rule $mt={14} />
              <Row $mt={15} $h={18}><DialogLabel $dense htmlFor="password">証明書のパスワードを入力して「署名」ボタンをクリック<Small>(P)</Small></DialogLabel></Row>
              <Password id="password" type="password" />
              <Row $mt={11}>
                <PushButton $w={99} type="button">ヘルプ</PushButton>
                <ButtonPair>
                  <PushButton $w={73} $primary type="submit">署名<Small>(S)</Small></PushButton>
                  <PushButton $w={73} type="button">キャンセル</PushButton>
                </ButtonPair>
              </Row>
            </DialogBody>
          </Dialog>
        </AppWindow>
        <Behind><BehindPart $h={34} $tint /><BehindPart $h={69} /><BehindPart $h={61} /></Behind>
      </Desktop>
      <Taskbar>
        <TaskBit $gap={56} $w={6} $color="#a5504a" />
        <TaskBit $gap={22} $w={5} $color="#c8b840" />
        <TaskBit $gap={31} $w={16} $color="#4a3a20" />
        <TaskBit $gap={56} $w={9} $color="#d8cc60" />
        <TaskBit $gap={12} $w={13} $color="#b8ccd0" />
        <TaskBit $gap={38} $w={5} $color="#5a60a8" />
        <TaskBit $gap={35} $w={16} $color="#e8eeee" />
        <TaskBit $gap={15} $w={6} $color="#e8eeee" />
        <TaskBit $gap={1090} $w={89} $h={8} $color="#46585f" />
        <TaskBit $gap={302} $w={20} $color="#b8c0c2" />
      </Taskbar>
    </Screen>
  );
}
